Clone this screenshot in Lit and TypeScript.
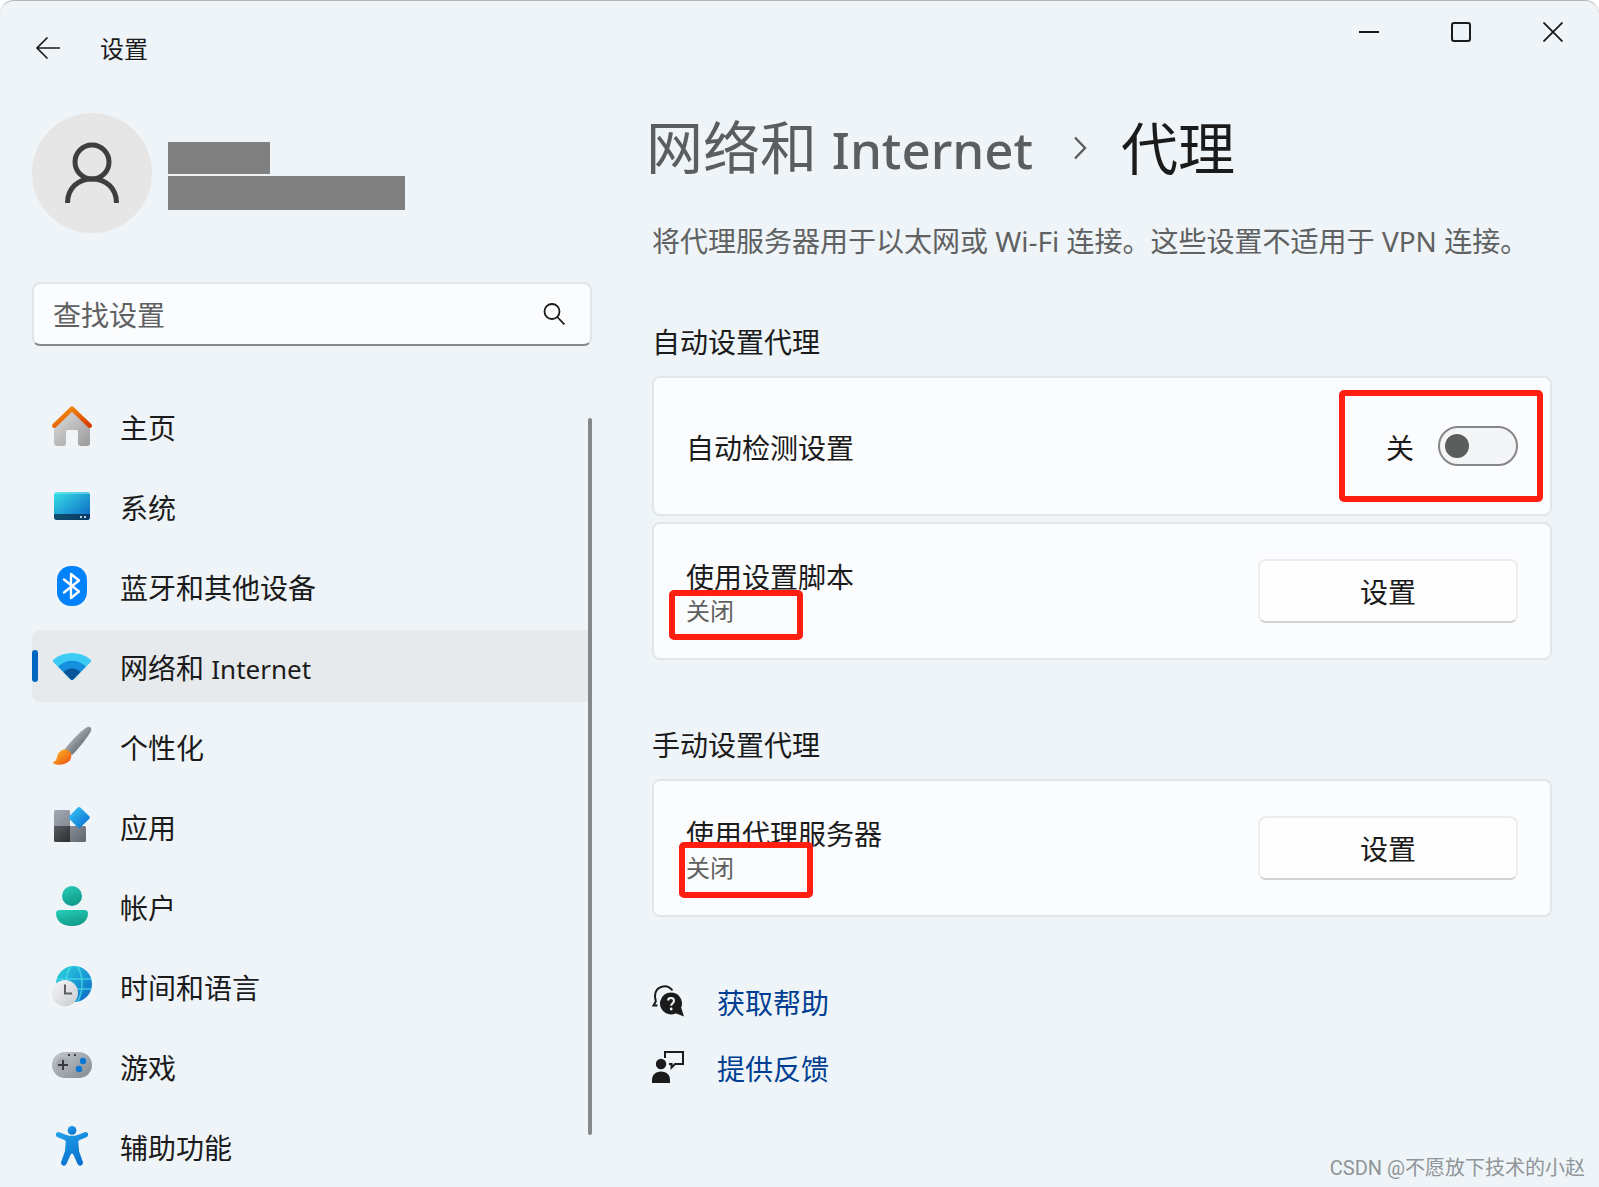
import { LitElement, html, svg, css } from "lit";
import { customElement, property, state } from "lit/decorators.js";
import { classMap } from "lit/directives/class-map.js";

const icons: Record<string, unknown> = {
  home: svg`<defs>
      <linearGradient id="hw" x1="0" y1="0" x2="1" y2="1"><stop offset="0" stop-color="#dedede"/><stop offset="1" stop-color="#9a9a9a"/></linearGradient>
      <linearGradient id="hr" x1="0" y1="0" x2="1" y2="1"><stop offset="0" stop-color="#f79a0c"/><stop offset="1" stop-color="#d83b01"/></linearGradient>
    </defs>
    <path fill="url(#hw)" d="M20 4 38 21V37a3 3 0 0 1-3 3h-6a3 3 0 0 1-3-3V25.500a1.500 1.500 0 0 0-1.500-1.500h-9a1.500 1.500 0 0 0-1.500 1.500V37a3 3 0 0 1-3 3H5a3 3 0 0 1-3-3V21z"/>
    <path fill="none" stroke="url(#hr)" stroke-width="4.600" stroke-linecap="round" stroke-linejoin="round" d="M2.400 19.600 20 2.600 37.600 19.600"/>`,
  system: svg`<defs>
      <linearGradient id="sy" x1="0" y1="0" x2="1" y2="1"><stop offset="0" stop-color="#36e0e6"/><stop offset="1" stop-color="#0b62c4"/></linearGradient>
      <linearGradient id="sb" x1="0" y1="0" x2="1" y2="0"><stop offset="0" stop-color="#104f6d"/><stop offset="1" stop-color="#0b3766"/></linearGradient>
    </defs>
    <rect x="2" y="6" width="36" height="28" rx="3" fill="url(#sy)"/>
    <path d="M2 8a2.500 2.500 0 0 1 2.500-2h31A2.500 2.500 0 0 1 38 8z" fill="#8ceef0" opacity=".5"/>
    <path d="M2 28h36v3a3 3 0 0 1-3 3H5a3 3 0 0 1-3-3z" fill="url(#sb)"/>
    <path d="M28 30h2v2h-2zM32 30h2v2h-2z" fill="#b8d2e2"/>`,
  bluetooth: svg`<rect x="5" y="0" width="30" height="40" rx="14" fill="#0082fc"/>
    <path fill="none" stroke="#fff" stroke-width="2.400" stroke-linejoin="round" stroke-linecap="round" d="M12 13.500 27 25.500 19 32V8l8 6.500-15 12"/>`,
  wifi: svg`<path fill="#3ccbf4" d="M1.500 16.200C.6 15.200.7 14.200 1.800 13.300 12.500 4.900 27.500 4.900 38.200 13.300c1.100.9 1.200 1.900.3 2.900L21.500 33.200q-1.500 1.300-3 0z"/>
    <path fill="#1490df" d="M6 20.500c8-7.800 20-7.800 28 0L21.500 33.200q-1.500 1.300-3 0z"/>
    <path fill="#0a5499" d="M11.500 26c4.500-4.800 12.500-4.800 17 0l-7 7.200q-1.500 1.300-3 0z"/>`,
  brush: svg`<defs>
      <linearGradient id="bh" x1="0" y1="0" x2="1" y2="1"><stop offset=".25" stop-color="#b4bac2"/><stop offset=".7" stop-color="#6b6f77"/></linearGradient>
      <linearGradient id="bt" x1="0" y1="0" x2="1" y2="1"><stop offset="0" stop-color="#ffc327"/><stop offset="1" stop-color="#ea4a12"/></linearGradient>
    </defs>
    <path fill="url(#bh)" d="M12.500 23.500C19 15 28 5.500 35 1.200c3-1.200 5 .8 4 3.700C35.500 11 28.500 20.500 20 29z"/>
    <path fill="url(#bt)" d="M1.500 37.200c-.8-.5-.6-1.200.3-1.500 3-1 2.700-3.700 3.800-6.700C7.500 24 13 22 17 25c3.500 2.800 3 8-.7 10.800C12 39.500 5 39.500 1.500 37.200z"/>`,
  apps: svg`<defs>
      <linearGradient id="a1" x1="0" y1="0" x2="1" y2="1"><stop offset="0" stop-color="#a3a9b2"/><stop offset="1" stop-color="#858b95"/></linearGradient>
      <linearGradient id="a2" x1="0" y1="0" x2="1" y2="1"><stop offset="0" stop-color="#585b5f"/><stop offset="1" stop-color="#2b2d30"/></linearGradient>
      <linearGradient id="a3" x1="0" y1="0" x2="1" y2="1"><stop offset="0" stop-color="#878c95"/><stop offset="1" stop-color="#60646c"/></linearGradient>
      <linearGradient id="a4" x1="0" y1="0" x2="1" y2="1"><stop offset="0" stop-color="#3ccbf8"/><stop offset="1" stop-color="#0669cf"/></linearGradient>
    </defs>
    <path fill="url(#a1)" d="M3.500 4H16.500A1.500 1.500 0 0 1 18 5.500V20H2V5.500A1.500 1.500 0 0 1 3.500 4z"/>
    <path fill="url(#a2)" d="M2 20h16v16H3.500A1.500 1.500 0 0 1 2 34.500z"/>
    <path fill="url(#a3)" d="M18 20h14.500a1.500 1.500 0 0 1 1.500 1.500v13a1.500 1.500 0 0 1-1.500 1.500H18z"/>
    <path fill="url(#a4)" d="M25.400 1.700q1.600-1.500 3.200 0l8.700 8.500q1.200 1.300 0 2.600L28.600 21.300q-1.600 1.500-3.200 0L17.500 13q-1.500-1.500 0-3z"/>`,
  account: svg`<defs><linearGradient id="ac" x1="0" y1="0" x2=".4" y2="1"><stop offset="0" stop-color="#26cfb8"/><stop offset="1" stop-color="#109c8b"/></linearGradient></defs>
    <circle cx="20" cy="10" r="10" fill="url(#ac)"/>
    <path fill="url(#ac)" d="M7.500 24h25a3.500 3.500 0 0 1 3.500 3.500C36 35.500 29 40 20 40S4 35.500 4 27.500A3.500 3.500 0 0 1 7.500 24z"/>`,
  time: svg`<defs>
      <linearGradient id="tg" x1="0" y1="0" x2="1" y2="1"><stop offset="0" stop-color="#33d6e0"/><stop offset=".5" stop-color="#1b9ed6"/><stop offset="1" stop-color="#0a60c0"/></linearGradient>
      <linearGradient id="tc" x1="0" y1="0" x2="1" y2="1"><stop offset="0" stop-color="#f7f7f8"/><stop offset="1" stop-color="#c9cbd1"/></linearGradient>
      <clipPath id="tk"><circle cx="22" cy="18" r="18"/></clipPath>
    </defs>
    <circle cx="22" cy="18" r="18" fill="url(#tg)"/>
    <g clip-path="url(#tk)" fill="none" stroke="#4ce0e8" stroke-width="1.600" opacity=".75"><path d="M3 13h38M3 23h38"/><ellipse cx="22" cy="18" rx="8" ry="19"/></g>
    <circle cx="13" cy="27.500" r="12.500" fill="#a9adb3"/><circle cx="13" cy="27" r="13" fill="url(#tc)"/>
    <path d="M13 18.500V27.500h7" fill="none" stroke="#5c5e62" stroke-width="2"/>`,
  game: svg`<defs><linearGradient id="gm" x1="0" y1="0" x2="1" y2="1"><stop offset="0" stop-color="#c3c8ce"/><stop offset="1" stop-color="#858a91"/></linearGradient></defs>
    <rect x="0" y="6" width="40" height="26" rx="13" fill="url(#gm)"/>
    <circle cx="11" cy="19" r="7" fill="#a5aab1"/>
    <path d="M11 14v10M6 19h10" stroke="#3a3b3e" stroke-width="2"/>
    <path d="M16 8h2v2h-2zM22 8h2v2h-2z" fill="#3a3b3e"/>
    <circle cx="31" cy="15" r="3.200" fill="#0a78d4"/><circle cx="27" cy="23" r="3.200" fill="#0a78d4"/>`,
  access: svg`<defs><linearGradient id="ax" x1="0" y1="0" x2=".5" y2="1"><stop offset="0" stop-color="#22a2ea"/><stop offset="1" stop-color="#0a72d0"/></linearGradient></defs>
    <circle cx="20" cy="4.400" r="4.400" fill="url(#ax)"/>
    <path fill="url(#ax)" d="M7.200 6.200 14.500 8.900q5.500 1.800 11 0L32.800 6.200c3-.8 4.800 3.300 1.500 5L27.500 14.100q-1.300.6-1.200 2L27 25l3.900 11c.8 3.400-3.700 5.200-5.300 2L21.300 28.400q-1.300-2-2.600 0L14.400 38c-1.600 3.200-6.100 1.400-5.300-2L13 25l.7-8.900q.1-1.400-1.200-2L5.700 11.200c-3.300-1.700-1.500-5.800 1.500-5z"/>`,
};

interface NavEntry {
  icon: string;
  label: string;
  latin?: string;
}

const entries: NavEntry[] = [
  { icon: "home", label: "主页" },
  { icon: "system", label: "系统" },
  { icon: "bluetooth", label: "蓝牙和其他设备" },
  { icon: "wifi", label: "网络和", latin: "Internet" },
  { icon: "brush", label: "个性化" },
  { icon: "apps", label: "应用" },
  { icon: "account", label: "帐户" },
  { icon: "time", label: "时间和语言" },
  { icon: "game", label: "游戏" },
  { icon: "access", label: "辅助功能" },
];

@customElement("nav-item")
class NavItem extends LitElement {
  @property() icon = "";
  @property() label = "";
  @property() latin = "";
  @property({ type: Boolean }) current = false;

  static styles = css`
    :host { display: block; }
    .link {
      display: flex;
      align-items: center;
      height: 72px;
      border-radius: 8px;
      color: #1b1b1b;
      font-size: 28px;
      line-height: 40px;
      text-decoration: none;
    }
    .link.current { background: #e6eaed; }
    .marker { width: 6px; height: 32px; border-radius: 3px; margin-right: 14px; }
    .current .marker { background: #0067c0; }
    .icon { width: 40px; height: 40px; margin-right: 28px; flex: none; }
    .label { padding-top: 4px; white-space: nowrap; }
    .latin { font-size: 26px; }
  `;

  render() {
    return html`<a class=${classMap({ link: true, current: this.current })} href="#" aria-current=${this.current ? "page" : "false"}>
      <span class="marker"></span>
      <svg class="icon" viewBox="0 0 40 40" aria-hidden="true">${icons[this.icon]}</svg>
      <span class="label">${this.label}${this.latin ? html` <span class="latin">${this.latin}</span>` : ""}</span>
    </a>`;
  }
}

@customElement("setting-card")
class SettingCard extends LitElement {
  @property() heading = "";
  @property() note = "";

  static styles = css`
    :host { display: block; }
    .card {
      box-sizing: border-box;
      display: flex;
      align-items: center;
      justify-content: space-between;
      min-height: 138px;
      padding: 0 32px;
      border: 2px solid #e1e6e9;
      border-radius: 8px;
      background: #fbfcfe;
    }
    .card.single { min-height: 140px; }
    .text { position: relative; display: flex; flex-direction: column; padding-top: 4px; }
    .heading { color: #1b1b1b; font-size: 28px; line-height: 36px; }
    .note { color: #5f6060; font-size: 24px; line-height: 32px; }
  `;

  render() {
    return html`<div class=${classMap({ card: true, single: !this.note })}>
      <div class="text">
        <span class="heading">${this.heading}</span>
        ${this.note ? html`<span class="note">${this.note}</span>` : ""}
        <slot name="mark"></slot>
      </div>
      <slot></slot>
    </div>`;
  }
}

@customElement("app-root")
class AppRoot extends LitElement {
  @state() private autoDetect = false;

  static styles = css`
    :host {
      display: block;
      font-family: "Noto Sans", "Noto Sans CJK SC", sans-serif;
      color: #1b1b1b;
    }
    * { box-sizing: border-box; }
    button, input { font: inherit; color: inherit; margin: 0; }
    .window {
      position: relative;
      display: grid;
      grid-template-columns: 560px minmax(0, 1fr);
      column-gap: 60px;
      height: 100vh;
      padding: 0 47px 0 32px;
      overflow: hidden;
      background: #eef4f7;
      border-top: 1px solid #b4b7b8;
      border-radius: 14px 14px 0 0;
    }
    .side { display: flex; flex-direction: column; min-height: 0; }
    .title { display: flex; align-items: center; gap: 36px; height: 96px; font-size: 24px; line-height: 32px; }
    .plain { display: flex; align-items: center; justify-content: center; border: 0; padding: 0; background: none; }
    .back { width: 32px; height: 32px; }
    .profile { display: flex; align-items: center; gap: 16px; margin-top: 16px; }
    .avatar { width: 120px; height: 120px; border-radius: 50%; background: #e6e6e6; }
    .masks { display: flex; flex-direction: column; gap: 2px; padding-top: 6px; }
    .mask { background: #808080; height: 34px; width: 237px; }
    .mask.short { width: 102px; height: 32px; }
    .search {
      display: flex;
      align-items: center;
      height: 64px;
      margin-top: 49px;
      padding: 0 24px 0 19px;
      border: 2px solid #e0e6e8;
      border-bottom-color: #868a8c;
      border-radius: 8px;
      background: #fbfcfe;
    }
    .field { flex: 1; min-width: 0; border: 0; padding: 2px 0 0; outline: 0; background: none; font-size: 28px; line-height: 40px; }
    .field::placeholder { color: #5f6162; opacity: 1; }
    .nav { position: relative; display: flex; flex-direction: column; gap: 8px; margin-top: 44px; }
    .thumb { position: absolute; right: 0; top: 28px; width: 4px; height: 717px; border-radius: 2px; background: #858889; }
    .main { display: flex; flex-direction: column; min-width: 0; padding-top: 106px; }
    .crumbs { display: flex; align-items: center; height: 82px; margin: 0 0 0 -6px; font-size: 57px; line-height: 80px; font-weight: 400; white-space: nowrap; }
    .crumb { color: #5b5d5e; text-decoration: none; }
    .latin { font-size: 51px; font-weight: 500; }
    .sep { margin: 0 34px 0 40px; }
    .lead { margin: 32px 0 0; color: #5f6162; font-size: 28px; line-height: 40px; white-space: nowrap; }
    .group { margin: 61px 0 0; font-size: 28px; line-height: 40px; font-weight: 400; }
    .cards { display: flex; flex-direction: column; gap: 6px; margin: 14px 0 4px; }
    .switch { position: relative; display: flex; align-items: center; gap: 24px; font-size: 28px; line-height: 40px; }
    .status { padding-top: 4px; }
    .toggle {
      appearance: none;
      width: 80px;
      height: 40px;
      padding: 0 5px;
      display: flex;
      align-items: center;
      border: 2px solid #868788;
      border-radius: 20px;
      background: #f4f5f7;
    }
    .toggle::before { content: ""; width: 24px; height: 24px; border-radius: 50%; background: #5c5e5d; }
    .toggle:checked { justify-content: flex-end; }
    .set {
      width: 260px;
      height: 64px;
      padding: 2px 0 0;
      border: 2px solid #ececee;
      border-bottom-color: #d2d3d4;
      border-radius: 8px;
      background: #fefefe;
      font-size: 28px;
      line-height: 40px;
    }
    .mark { position: absolute; border: 6px solid #ff1e10; border-radius: 5px; pointer-events: none; }
    .mark.a { left: -47px; top: -34px; right: -25px; height: 112px; }
    .mark.b { left: -17px; top: 35px; width: 134px; height: 50px; }
    .mark.c { left: -7px; top: 30px; width: 134px; height: 56px; }
    .links { display: flex; flex-direction: column; gap: 26px; margin-top: 60px; }
    .row { display: flex; align-items: center; gap: 31px; height: 40px; color: #003e92; font-size: 28px; line-height: 40px; text-decoration: none; }
    .row svg { color: #1b1b1b; }
    .caption { padding-top: 4px; }
    .controls { position: absolute; top: 0; right: 0; display: flex; }
    .control { width: 92px; height: 62px; }
    .water { position: absolute; right: 14px; bottom: 5px; color: #8f9598; font-family: Roboto, "Noto Sans CJK SC", sans-serif; font-size: 20px; line-height: 28px; }
  `;

  render() {
    return html`<div class="window">
      <div class="side">
        <div class="title">
          <button class="plain back" aria-label="返回">
            <svg width="24" height="24" viewBox="0 0 24 24" fill="none" stroke="#1b1b1b" stroke-width="1.600"><path d="M24 11H1M11.500 .5 1 11l10.500 10.500"/></svg>
          </button>
          <span>设置</span>
        </div>
        <div class="profile">
          <div class="avatar">
            <svg width="120" height="120" viewBox="0 0 120 120" fill="none" stroke="#3e3e3e" stroke-width="5"><ellipse cx="60" cy="49" rx="17" ry="17"/><path d="M35.500 90C35.500 75 46 66 60 66s24.500 9 24.500 24"/></svg>
          </div>
          <div class="masks"><span class="mask short"></span><span class="mask"></span></div>
        </div>
        <div class="search">
          <input class="field" type="text" placeholder="查找设置" aria-label="查找设置" />
          <button class="plain" aria-label="搜索">
            <svg width="24" height="24" viewBox="0 0 24 24" fill="none" stroke="#1b1b1b" stroke-width="1.800"><circle cx="10" cy="9.500" r="7.500"/><path d="M15.300 15l7 7.300"/></svg>
          </button>
        </div>
        <nav class="nav">
          ${entries.map((e) => html`<nav-item .icon=${e.icon} .label=${e.label} .latin=${e.latin ?? ""} .current=${e.icon === "wifi"}></nav-item>`)}
          <span class="thumb"></span>
        </nav>
      </div>
      <main class="main">
        <h1 class="crumbs">
          <a class="crumb" href="#">网络和 <span class="latin">Internet</span></a>
          <svg class="sep" width="14" height="24" viewBox="0 0 14 24" fill="none" stroke="#5b5d5e" stroke-width="2.400"><path d="M2 1.500 12 12 2 22.500"/></svg>
          <span>代理</span>
        </h1>
        <p class="lead">将代理服务器用于以太网或 Wi-Fi 连接。这些设置不适用于 VPN 连接。</p>
        <h2 class="group">自动设置代理</h2>
        <div class="cards">
          <setting-card heading="自动检测设置">
            <label class="switch">
              <span class="status">${this.autoDetect ? "开" : "关"}</span>
              <input class="toggle" type="checkbox" role="switch" aria-label="自动检测设置" .checked=${this.autoDetect}
                @change=${(e: Event) => (this.autoDetect = (e.target as HTMLInputElement).checked)} />
              <span class="mark a"></span>
            </label>
          </setting-card>
          <setting-card heading="使用设置脚本" note="关闭">
            <span slot="mark" class="mark b"></span>
            <button class="set">设置</button>
          </setting-card>
        </div>
        <h2 class="group">手动设置代理</h2>
        <div class="cards">
          <setting-card heading="使用代理服务器" note="关闭">
            <span slot="mark" class="mark c"></span>
            <button class="set">设置</button>
          </setting-card>
        </div>
        <div class="links">
          <a class="row" href="#">
            <svg width="34" height="34" viewBox="0 0 34 34"><path fill="none" stroke="currentColor" stroke-width="2" d="M20.500 6.500C15 -1 3 2 3 12c0 3 .8 4 .8 5.500L1.500 21.500h4"/><path fill="currentColor" d="M19 8.500a11 11 0 1 1-5 20.800A11 11 0 0 1 19 8.500zM29 23l3 9.500-9-3.500z"/><path fill="none" stroke="#eef4f7" stroke-width="2" d="M16 16.500c.5-3.500 6-3 6 .3 0 2.500-2.800 2.400-2.800 5"/><circle cx="19.200" cy="25" r="1.400" fill="#eef4f7"/></svg>
            <span class="caption">获取帮助</span>
          </a>
          <a class="row" href="#">
            <svg width="34" height="34" viewBox="0 0 34 34"><circle cx="9" cy="14" r="5.200" fill="currentColor"/><path fill="currentColor" d="M0 33v-3c0-5 3.500-8.500 9-8.500s9 3.500 9 8.500v3z"/><path fill="none" stroke="currentColor" stroke-width="2" d="M13 8V2h18v12h-8l-3.500 3.500V14H17"/></svg>
            <span class="caption">提供反馈</span>
          </a>
        </div>
      </main>
      <div class="controls">
        <button class="plain control" aria-label="最小化"><svg width="20" height="20" viewBox="0 0 20 20"><path d="M0 9h20v2H0z" fill="#1b1b1b"/></svg></button>
        <button class="plain control" aria-label="最大化"><svg width="20" height="20" viewBox="0 0 20 20" fill="none" stroke="#1b1b1b" stroke-width="2"><rect x="1" y="1" width="18" height="18" rx="2"/></svg></button>
        <button class="plain control" aria-label="关闭"><svg width="20" height="20" viewBox="0 0 20 20" stroke="#1b1b1b" stroke-width="1.800"><path d="M.5.5l19 19M19.500.5l-19 19"/></svg></button>
      </div>
      <div class="water">CSDN @不愿放下技术的小赵</div>
    </div>`;
  }
}
